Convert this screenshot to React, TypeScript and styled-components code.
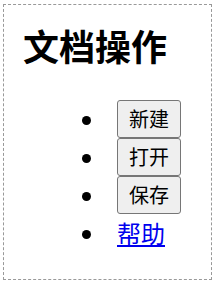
import styled, { createGlobalStyle } from 'styled-components';

const Global = createGlobalStyle`
  body {
    margin: 0;
    background: #fff;
    font-family: "Noto Sans CJK SC", "Noto Sans", sans-serif;
  }
`;

const Panel = styled.div`
  margin: 4px 3px;
  padding: 0 19px;
  border: 1px dashed #999;
  box-sizing: border-box;
  height: 276px;
`;

const Title = styled.h1`
  margin: 19px 0 0;
  font-size: 36px;
  line-height: 43px;
  font-weight: bold;
`;

const Menu = styled.ul`
  margin: 33px 0 0;
  padding-left: 84px;
  font-size: 24px;
  list-style: disc;
`;

const Item = styled.li`
  height: 38px;
  line-height: 38px;
  padding-left: 10px;
`;

const Button = styled.button`
  font-family: inherit;
  font-size: 20px;
  line-height: 24px;
  padding: 6px 11px;
  color: #000;
  background: #efefef;
  border: 1px solid #767676;
  border-radius: 3px;
  vertical-align: top;
`;

const Link = styled.a`
  color: #0000ee;
  text-decoration: underline;
`;

export default function App() {
  return (
    <>
      <Global />
      <Panel>
        <Title>文档操作</Title>
        <Menu>
          <Item>
            <Button>新建</Button>
          </Item>
          <Item>
            <Button>打开</Button>
          </Item>
          <Item>
            <Button>保存</Button>
          </Item>
          <Item>
            <Link href="#">帮助</Link>
          </Item>
        </Menu>
      </Panel>
    </>
  );
}
